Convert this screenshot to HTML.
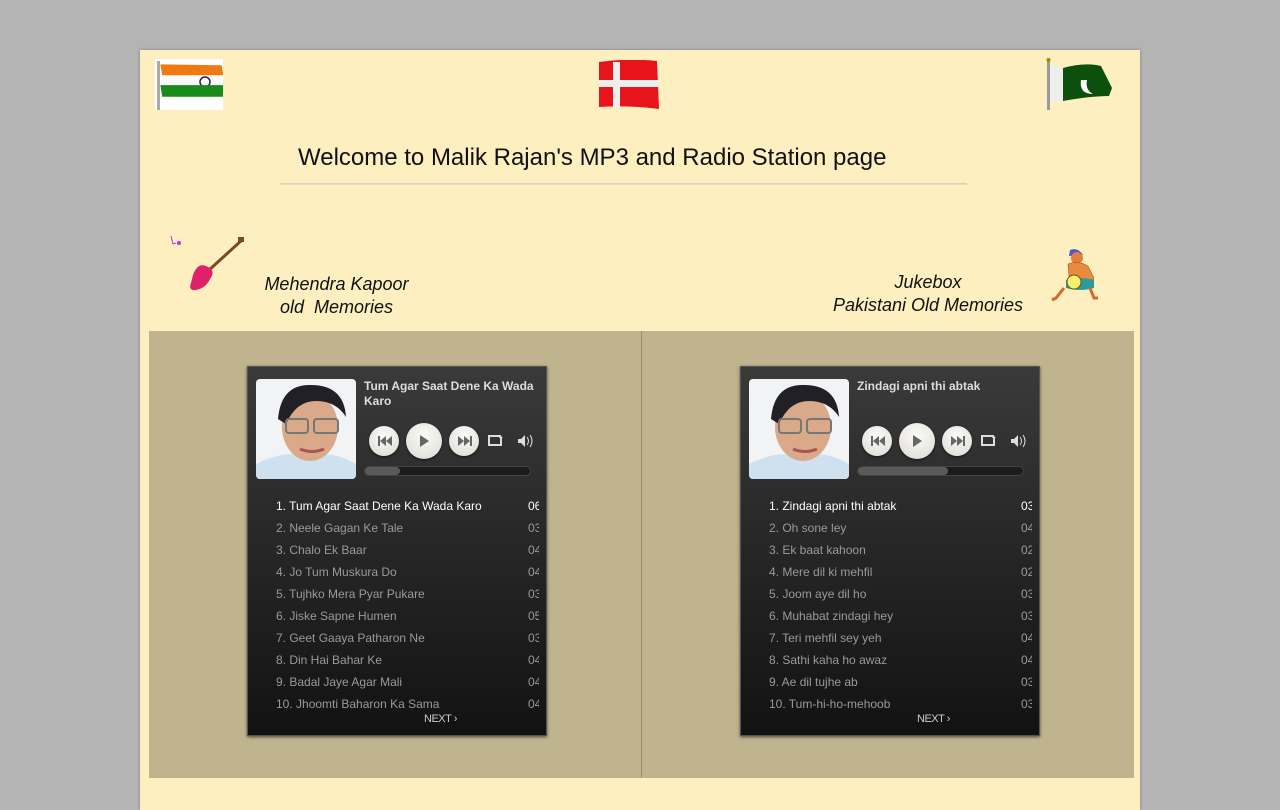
<!DOCTYPE html>
<html><head><meta charset="utf-8"><style>
*{margin:0;padding:0;box-sizing:border-box}
body{width:1280px;height:800px;background:#b4b4b4;font-family:"Liberation Sans",Arial,sans-serif;position:relative;overflow:hidden}
.wrap{position:absolute;left:140px;top:50px;width:1000px;height:760px;background:#fdefbf;box-shadow:0 0 3px rgba(0,0,0,.3)}
.abs{position:absolute}
h1{position:absolute;left:158px;top:94px;font-weight:normal;font-size:24px;color:#111;white-space:nowrap}
.hr{position:absolute;left:140px;top:133px;width:687px;height:2px;background:linear-gradient(#d8cfae,#efe5c0)}
.it{position:absolute;font-style:italic;font-size:18px;color:#111;text-align:center;line-height:23px}
.tan{position:absolute;left:9px;top:281px;width:985px;height:447px;background:#c0b48f}
.div{position:absolute;left:501px;top:281px;width:1px;height:447px;background:#9c9070}
.pl{position:absolute;width:300px;height:370px;background:linear-gradient(#3a3a3a 0,#2a2a2a 40%,#121212 100%);border:1px solid #555;box-shadow:0 1px 3px rgba(0,0,0,.6);overflow:hidden}
.photo{position:absolute;left:8px;top:12px;width:100px;height:100px;border-radius:4px;overflow:hidden}
.ttl{position:absolute;left:116px;top:12px;width:178px;color:#ddd;font-size:12px;font-weight:bold;line-height:15px}
.btn{position:absolute;border-radius:50%;background:radial-gradient(circle at 50% 35%,#fbfbf8,#dcd9d2);box-shadow:0 1px 2px rgba(0,0,0,.6)}
.bar{position:absolute;left:116px;top:99px;width:167px;height:10px;border-radius:5px;background:#1c1c1c;border:1px solid #444;overflow:hidden}
.bar i{display:block;height:100%;background:#5a5a5a;border-radius:5px}
.tr{position:absolute;left:28px;font-size:12px;color:#9a9a9a;white-space:nowrap;line-height:14px}
.du{position:absolute;left:280px;width:11px;overflow:hidden;font-size:12px;color:#9a9a9a;line-height:14px}
.w{color:#fff}
.nx{position:absolute;left:176px;top:346px;font-size:11px;color:#ccc;letter-spacing:-.5px}
</style></head><body>
<div class="wrap">
<svg class="abs" style="left:15px;top:9px" width="68" height="51" viewBox="0 0 68 51"><rect width="68" height="51" fill="#fff"/><rect x="2" y="2" width="3" height="49" fill="#aaa"/><path d="M6 6 L74 7 L76 18 L8 18Z" fill="#f07a10" transform="scale(.9)"/><path d="M6 17 H68 V29 H6Z" fill="#fafafa"/><circle cx="50" cy="23" r="5" fill="none" stroke="#224" stroke-width="1.5"/><path d="M6 29 H80 L82 42 H8Z" fill="#1a8a1a" transform="scale(.9)"/></svg>
<svg class="abs" style="left:459px;top:10px" width="60" height="50" viewBox="0 0 60 50"><path d="M0 2 Q30 -2 58 1 L60 49 Q30 45 0 47Z" fill="#e8141b"/><rect x="14" y="2" width="7" height="46" fill="#eee"/><rect x="0" y="20" width="60" height="7" fill="#eee"/></svg>
<svg class="abs" style="left:905px;top:8px" width="70" height="52" viewBox="0 0 70 52"><rect x="2" y="2" width="3" height="50" fill="#999"/><circle cx="3.5" cy="2" r="2" fill="#a80"/><path d="M5 8 L18 10 L18 43 L5 44Z" fill="#eee"/><path d="M18 10 Q40 4 56 8 L67 30 L64 38 Q45 38 18 43Z" fill="#0d4f0d"/><path d="M36 22 Q34 36 48 36 Q40 32 42 22Z" fill="#fff"/></svg>
<h1>Welcome to Malik Rajan's MP3 and Radio Station page</h1>
<div class="hr"></div>
<svg class="abs" style="left:28px;top:183px" width="78" height="60" viewBox="0 0 78 60"><path d="M3 3 l2 8 l3 -1" stroke="#c3c" fill="none"/><circle cx="11" cy="10" r="2" fill="#c3c"/><path d="M74 7 L40 38" stroke="#7a4a20" stroke-width="3"/><path d="M25 42 Q30 28 40 34 Q48 38 42 46 Q38 55 28 57 Q20 58 23 50Z" fill="#e0206a"/><rect x="70" y="4" width="6" height="5" fill="#7a4a20"/></svg>
<div class="it" style="left:113px;top:223px;width:167px">Mehendra Kapoor<br>old&nbsp; Memories</div>
<div class="it" style="left:680px;top:221px;width:216px">Jukebox<br>Pakistani Old Memories</div>
<svg class="abs" style="left:910px;top:198px" width="54" height="56" viewBox="0 0 54 56"><path d="M20 2 q8 -3 13 5 l-14 1z" fill="#55c"/><circle cx="27" cy="10" r="6" fill="#e0803a"/><path d="M18 16 q10 -4 20 2 l6 12 l-2 10 l-22 0z" fill="#e88a40" stroke="#a40" stroke-width=".5"/><path d="M16 32 q14 -4 28 0 l0 8 q-14 4 -28 0z" fill="#2a9a9a"/><circle cx="24" cy="34" r="7" fill="#f4f070" stroke="#750"/><path d="M14 40 l-8 10 l-4 2 M40 40 l4 10 l4 0" stroke="#d06a30" stroke-width="3" fill="none"/></svg>
<div class="tan"></div><div class="div"></div>

<div class="pl" style="left:107px;top:316px">
 <div class="photo"><svg width="100" height="100" viewBox="0 0 100 100"><rect width="100" height="100" fill="#f2f3f4"/><path d="M0 85 Q30 70 50 78 Q75 70 100 85 V100 H0Z" fill="#cfe0ee"/><ellipse cx="54" cy="48" rx="28" ry="34" fill="#d9a98a"/><path d="M22 40 Q25 5 55 6 Q88 6 90 38 Q80 22 60 22 Q40 22 30 45Z" fill="#202026"/><rect x="30" y="40" width="22" height="14" rx="3" fill="none" stroke="#777" stroke-width="2"/><rect x="58" y="40" width="24" height="14" rx="3" fill="none" stroke="#777" stroke-width="2"/><path d="M44 70 q12 5 24 0" stroke="#a55" stroke-width="3" fill="none"/></svg></div>
 <div class="ttl">Tum Agar Saat Dene Ka Wada Karo</div>
 <div class="btn" style="left:121px;top:59px;width:30px;height:30px"></div>
 <div class="btn" style="left:158px;top:56px;width:36px;height:36px"></div>
 <div class="btn" style="left:201px;top:59px;width:30px;height:30px"></div>
 <svg class="abs" style="left:-1px;top:-1px" width="300" height="120"><g fill="#666"><path d="M131 70h2v10h-2zM139 70v10l-6-5zM145 70v10l-6-5z"/><path d="M173 69v12l9-6z"/><path d="M211 70v10l6-5zM217 70v10l6-5zM223 70h2v10h-2z"/></g>
 <g fill="none" stroke="#ddd" stroke-width="2"><path d="M254 70h-12v9h12v-7"/></g><path d="M253 69l3 3h-4z" fill="#ddd"/>
 <path d="M271 73h3l4-4v12l-4-4h-3z" fill="#ddd"/><path d="M280 71q3 4 0 8M283 69q4 6 0 12" stroke="#ddd" fill="none"/></svg>
 <div class="bar"><i style="width:35px"></i></div>
 <div class="tr w" style="top:132px">1. Tum Agar Saat Dene Ka Wada Karo</div><div class="du w" style="top:132px">06</div>
 <div class="tr" style="top:154px">2. Neele Gagan Ke Tale</div><div class="du" style="top:154px">03</div>
 <div class="tr" style="top:176px">3. Chalo Ek Baar</div><div class="du" style="top:176px">04</div>
 <div class="tr" style="top:198px">4. Jo Tum Muskura Do</div><div class="du" style="top:198px">04</div>
 <div class="tr" style="top:220px">5. Tujhko Mera Pyar Pukare</div><div class="du" style="top:220px">03</div>
 <div class="tr" style="top:242px">6. Jiske Sapne Humen</div><div class="du" style="top:242px">05</div>
 <div class="tr" style="top:264px">7. Geet Gaaya Patharon Ne</div><div class="du" style="top:264px">03</div>
 <div class="tr" style="top:286px">8. Din Hai Bahar Ke</div><div class="du" style="top:286px">04</div>
 <div class="tr" style="top:308px">9. Badal Jaye Agar Mali</div><div class="du" style="top:308px">04</div>
 <div class="tr" style="top:330px">10. Jhoomti Baharon Ka Sama</div><div class="du" style="top:330px">04</div>
 <div class="nx">NEXT &#8250;</div>
</div>

<div class="pl" style="left:600px;top:316px">
 <div class="photo"><svg width="100" height="100" viewBox="0 0 100 100"><rect width="100" height="100" fill="#f2f3f4"/><path d="M0 85 Q30 70 50 78 Q75 70 100 85 V100 H0Z" fill="#cfe0ee"/><ellipse cx="54" cy="48" rx="28" ry="34" fill="#d9a98a"/><path d="M22 40 Q25 5 55 6 Q88 6 90 38 Q80 22 60 22 Q40 22 30 45Z" fill="#202026"/><rect x="30" y="40" width="22" height="14" rx="3" fill="none" stroke="#777" stroke-width="2"/><rect x="58" y="40" width="24" height="14" rx="3" fill="none" stroke="#777" stroke-width="2"/><path d="M44 70 q12 5 24 0" stroke="#a55" stroke-width="3" fill="none"/></svg></div>
 <div class="ttl">Zindagi apni thi abtak</div>
 <div class="btn" style="left:121px;top:59px;width:30px;height:30px"></div>
 <div class="btn" style="left:158px;top:56px;width:36px;height:36px"></div>
 <div class="btn" style="left:201px;top:59px;width:30px;height:30px"></div>
 <svg class="abs" style="left:-1px;top:-1px" width="300" height="120"><g fill="#666"><path d="M131 70h2v10h-2zM139 70v10l-6-5zM145 70v10l-6-5z"/><path d="M173 69v12l9-6z"/><path d="M211 70v10l6-5zM217 70v10l6-5zM223 70h2v10h-2z"/></g>
 <g fill="none" stroke="#ddd" stroke-width="2"><path d="M254 70h-12v9h12v-7"/></g><path d="M253 69l3 3h-4z" fill="#ddd"/>
 <path d="M271 73h3l4-4v12l-4-4h-3z" fill="#ddd"/><path d="M280 71q3 4 0 8M283 69q4 6 0 12" stroke="#ddd" fill="none"/></svg>
 <div class="bar"><i style="width:90px"></i></div>
 <div class="tr w" style="top:132px">1. Zindagi apni thi abtak</div><div class="du w" style="top:132px">03</div>
 <div class="tr" style="top:154px">2. Oh sone ley</div><div class="du" style="top:154px">04</div>
 <div class="tr" style="top:176px">3. Ek baat kahoon</div><div class="du" style="top:176px">02</div>
 <div class="tr" style="top:198px">4. Mere dil ki mehfil</div><div class="du" style="top:198px">02</div>
 <div class="tr" style="top:220px">5. Joom aye dil ho</div><div class="du" style="top:220px">03</div>
 <div class="tr" style="top:242px">6. Muhabat zindagi hey</div><div class="du" style="top:242px">03</div>
 <div class="tr" style="top:264px">7. Teri mehfil sey yeh</div><div class="du" style="top:264px">04</div>
 <div class="tr" style="top:286px">8. Sathi kaha ho awaz</div><div class="du" style="top:286px">04</div>
 <div class="tr" style="top:308px">9. Ae dil tujhe ab</div><div class="du" style="top:308px">03</div>
 <div class="tr" style="top:330px">10. Tum-hi-ho-mehoob</div><div class="du" style="top:330px">03</div>
 <div class="nx">NEXT &#8250;</div>
</div>
</div>
</body></html>
